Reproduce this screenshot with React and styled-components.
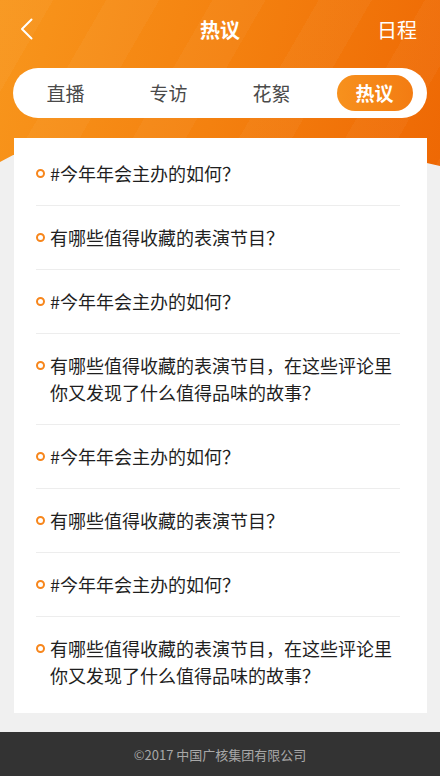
import React from 'react';
import styled, { createGlobalStyle } from 'styled-components';

const GlobalStyle = createGlobalStyle`
  html, body {
    margin: 0;
    padding: 0;
    background: #f0f0f0;
  }
  * {
    box-sizing: border-box;
  }
`;

const Page = styled.div`
  width: 440px;
  min-height: 776px;
  display: flex;
  flex-direction: column;
  background: #f0f0f0;
  font-family: "Noto Sans CJK SC", "Noto Sans", sans-serif;
`;

const Header = styled.header`
  height: 166px;
  padding: 0 13px;
  background:
    repeating-linear-gradient(120deg, rgba(255, 255, 255, 0.035) 0 46px, rgba(255, 255, 255, 0) 46px 92px),
    linear-gradient(105deg, #f8961c 0%, #f4810f 50%, #ee6804 100%);
  clip-path: polygon(0 0, 100% 0, 100% 100%, 97% 98.2%, 50% 86%, 3% 93.4%, 0 97.6%);
`;

const NavBar = styled.div`
  height: 58px;
  display: flex;
  align-items: center;
  justify-content: space-between;
  padding: 0 10px 0 7px;
  position: relative;
`;

const BackButton = styled.button`
  width: 24px;
  height: 24px;
  padding: 0;
  border: none;
  background: none;
  display: flex;
  align-items: center;
  justify-content: flex-start;
`;

const Title = styled.h1`
  position: absolute;
  left: 50%;
  transform: translateX(-50%);
  margin: 0;
  color: #fff;
  font-size: 20px;
  font-weight: 700;
`;

const NavLink = styled.span`
  color: #fff;
  font-size: 20px;
`;

const Tabs = styled.nav`
  margin-top: 10px;
  height: 50px;
  border-radius: 25px;
  background: #fff;
  display: grid;
  grid-template-columns: repeat(4, 1fr);
  align-items: center;
  padding: 0 1px;
`;

const Tab = styled.div`
  justify-self: center;
  width: 76px;
  height: 36px;
  line-height: 36px;
  text-align: center;
  border-radius: 18px;
  font-size: 19px;
  color: ${p => (p.$active ? '#fff' : '#4a4a4a')};
  font-weight: ${p => (p.$active ? 700 : 400)};
  background: ${p => (p.$active ? 'linear-gradient(90deg, #f7911d, #f37c12)' : 'transparent')};
`;

const Card = styled.main`
  position: relative;
  z-index: 1;
  margin: -28px 13px 0 14px;
  background: #fff;
  padding: 4px 27px 6px 22px;
`;

const Item = styled.div`
  display: flex;
  align-items: flex-start;
  padding: 18px 0;
  border-bottom: 1px solid #ededed;
  &:last-child {
    border-bottom: none;
  }
`;

const Dot = styled.span`
  flex: none;
  width: 9px;
  height: 9px;
  margin: 9px 5px 0 0;
  border: 2px solid #f7861c;
  border-radius: 50%;
`;

const ItemText = styled.p`
  margin: 0;
  font-size: 18px;
  line-height: 27px;
  color: #1f1f1f;
`;

const Spacer = styled.div`
  flex: 1;
  min-height: 19px;
`;

const Footer = styled.footer`
  height: 44px;
  background: #333;
  display: flex;
  align-items: center;
  justify-content: center;
  color: #a8a8a8;
  font-size: 13px;
`;

const tabs = ['直播', '专访', '花絮', '热议'];

const short1 = '#今年年会主办的如何？';
const short2 = '有哪些值得收藏的表演节目？';
const long = '有哪些值得收藏的表演节目，在这些评论里你又发现了什么值得品味的故事？';
const topics = [short1, short2, short1, long, short1, short2, short1, long];

const App = () => (
  <Page>
    <GlobalStyle />
    <Header>
      <NavBar>
        <BackButton aria-label="返回">
          <svg width="13" height="22" viewBox="0 0 13 22" fill="none">
            <path d="M11.5 1.5 L2 11 L11.5 20.5" stroke="#fff" strokeWidth="2" strokeLinecap="round" strokeLinejoin="round" />
          </svg>
        </BackButton>
        <Title>热议</Title>
        <NavLink>日程</NavLink>
      </NavBar>
      <Tabs>
        {tabs.map(t => (
          <Tab key={t} $active={t === '热议'}>{t}</Tab>
        ))}
      </Tabs>
    </Header>
    <Card>
      {topics.map((t, i) => (
        <Item key={i}>
          <Dot />
          <ItemText>{t}</ItemText>
        </Item>
      ))}
    </Card>
    <Spacer />
    <Footer>©2017 中国广核集团有限公司</Footer>
  </Page>
);

export default App;
